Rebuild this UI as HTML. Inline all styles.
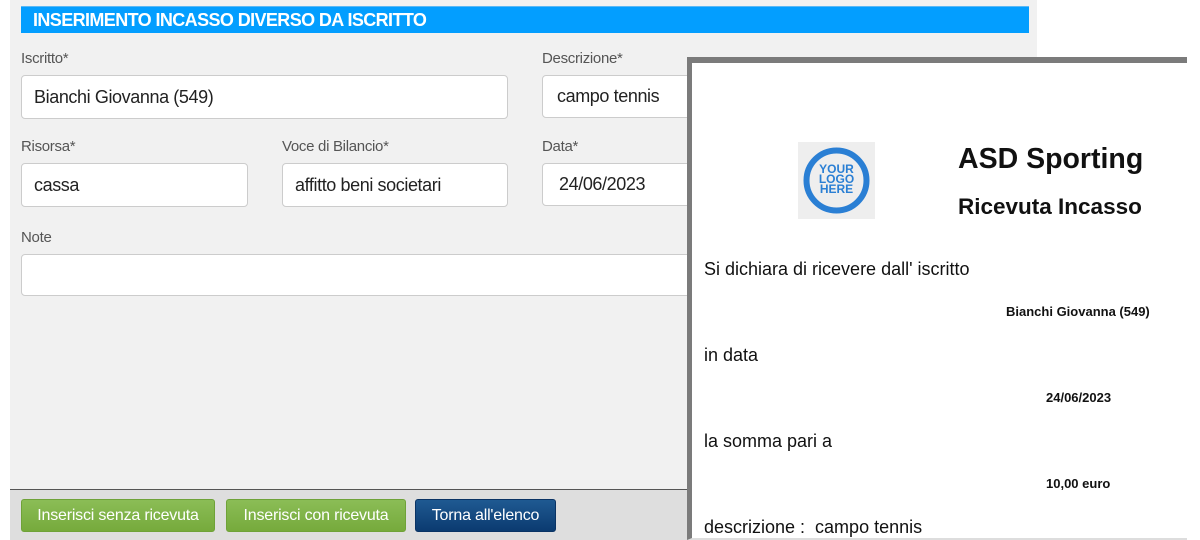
<!DOCTYPE html>
<html><head><style>
*{margin:0;padding:0;box-sizing:border-box}
body{width:1200px;height:540px;position:relative;overflow:hidden;background:#fff;font-family:"Liberation Sans",sans-serif}
.panel{position:absolute;left:10px;top:0;width:1027px;height:490px;background:#f1f1f1}
.hdr{position:absolute;left:21px;top:6px;width:1008px;height:27px;background:#039eff;border-top:1px solid #5ab8f5;color:#fff;font-weight:bold;font-size:18px;letter-spacing:-0.6px;line-height:26px;padding-left:12px}
.lbl{position:absolute;font-size:15px;color:#555;letter-spacing:-0.3px}
.inp{position:absolute;background:#fff;border:1px solid #ccc;border-radius:4px;font-size:18px;letter-spacing:-0.4px;color:#222;padding-left:12px;display:flex;align-items:center}
.footer{position:absolute;left:10px;top:489px;width:1027px;height:51px;background:#dedede;border-top:1px solid #555}
.btn{position:absolute;top:499px;height:33px;border-radius:3px;color:#fff;font-size:16px;letter-spacing:-0.2px;display:flex;align-items:center;justify-content:center}
.g{background:linear-gradient(#8bbd56,#76aa3c);border:1px solid #6fa238}
.b{background:linear-gradient(#1f5a92,#0b3b70);border:1px solid #0a3364}
.rc{position:absolute;left:687px;top:57px;width:500px;height:483px;background:#fff;border-top:6px solid #7b7b7b;border-left:5px solid #7b7b7b;border-bottom:2px solid #ddd;font-family:"Liberation Sans",sans-serif;color:#111}
.rc div{position:absolute;white-space:nowrap}
.t{font-size:18px;left:12px}
.s{font-size:13px;font-weight:bold}
</style></head><body>
<div class="panel"></div>
<div class="hdr">INSERIMENTO INCASSO DIVERSO DA ISCRITTO</div>
<div class="lbl" style="left:21px;top:50px">Iscritto*</div>
<div class="inp" style="left:21px;top:75px;width:487px;height:44px">Bianchi Giovanna (549)</div>
<div class="lbl" style="left:542px;top:50px">Descrizione*</div>
<div class="inp" style="left:542px;top:75px;width:200px;height:43px;padding-left:14px">campo tennis</div>
<div class="lbl" style="left:21px;top:138px">Risorsa*</div>
<div class="inp" style="left:21px;top:163px;width:227px;height:44px">cassa</div>
<div class="lbl" style="left:282px;top:138px">Voce di Bilancio*</div>
<div class="inp" style="left:282px;top:163px;width:226px;height:44px">affitto beni societari</div>
<div class="lbl" style="left:542px;top:138px">Data*</div>
<div class="inp" style="left:542px;top:163px;width:200px;height:43px;padding-left:16px">24/06/2023</div>
<div class="lbl" style="left:21px;top:229px">Note</div>
<div class="inp" style="left:21px;top:254px;width:720px;height:42px"></div>
<div class="footer"></div>
<div class="btn g" style="left:21px;width:194px">Inserisci senza ricevuta</div>
<div class="btn g" style="left:226px;width:180px">Inserisci con ricevuta</div>
<div class="btn b" style="left:415px;width:141px">Torna all'elenco</div>
<div class="rc">
 <div style="left:106px;top:79px;width:77px;height:77px;background:#eee">
  <svg width="77" height="77"><circle cx="38.5" cy="38.5" r="30" fill="none" stroke="#2a7fd4" stroke-width="6"/>
  <text x="38.5" y="31" font-family="Liberation Sans" font-weight="bold" font-size="12" fill="#2a7fd4" text-anchor="middle">YOUR</text>
  <text x="38.5" y="41" font-family="Liberation Sans" font-weight="bold" font-size="12" fill="#2a7fd4" text-anchor="middle">LOGO</text>
  <text x="38.5" y="51" font-family="Liberation Sans" font-weight="bold" font-size="12" fill="#2a7fd4" text-anchor="middle">HERE</text></svg>
 </div>
 <div style="left:266px;top:80px;font-size:28.5px;font-weight:bold">ASD Sporting</div>
 <div style="left:266px;top:131px;font-size:22.5px;font-weight:bold">Ricevuta Incasso</div>
 <div class="t" style="top:196px">Si dichiara di ricevere dall' iscritto</div>
 <div class="s" style="left:314px;top:241px">Bianchi Giovanna (549)</div>
 <div class="t" style="top:282px">in data</div>
 <div class="s" style="left:354px;top:327px">24/06/2023</div>
 <div class="t" style="top:368px">la somma pari a</div>
 <div class="s" style="left:354px;top:413px">10,00 euro</div>
 <div class="t" style="top:454px">descrizione :&nbsp; campo tennis</div>
</div>
</body></html>
